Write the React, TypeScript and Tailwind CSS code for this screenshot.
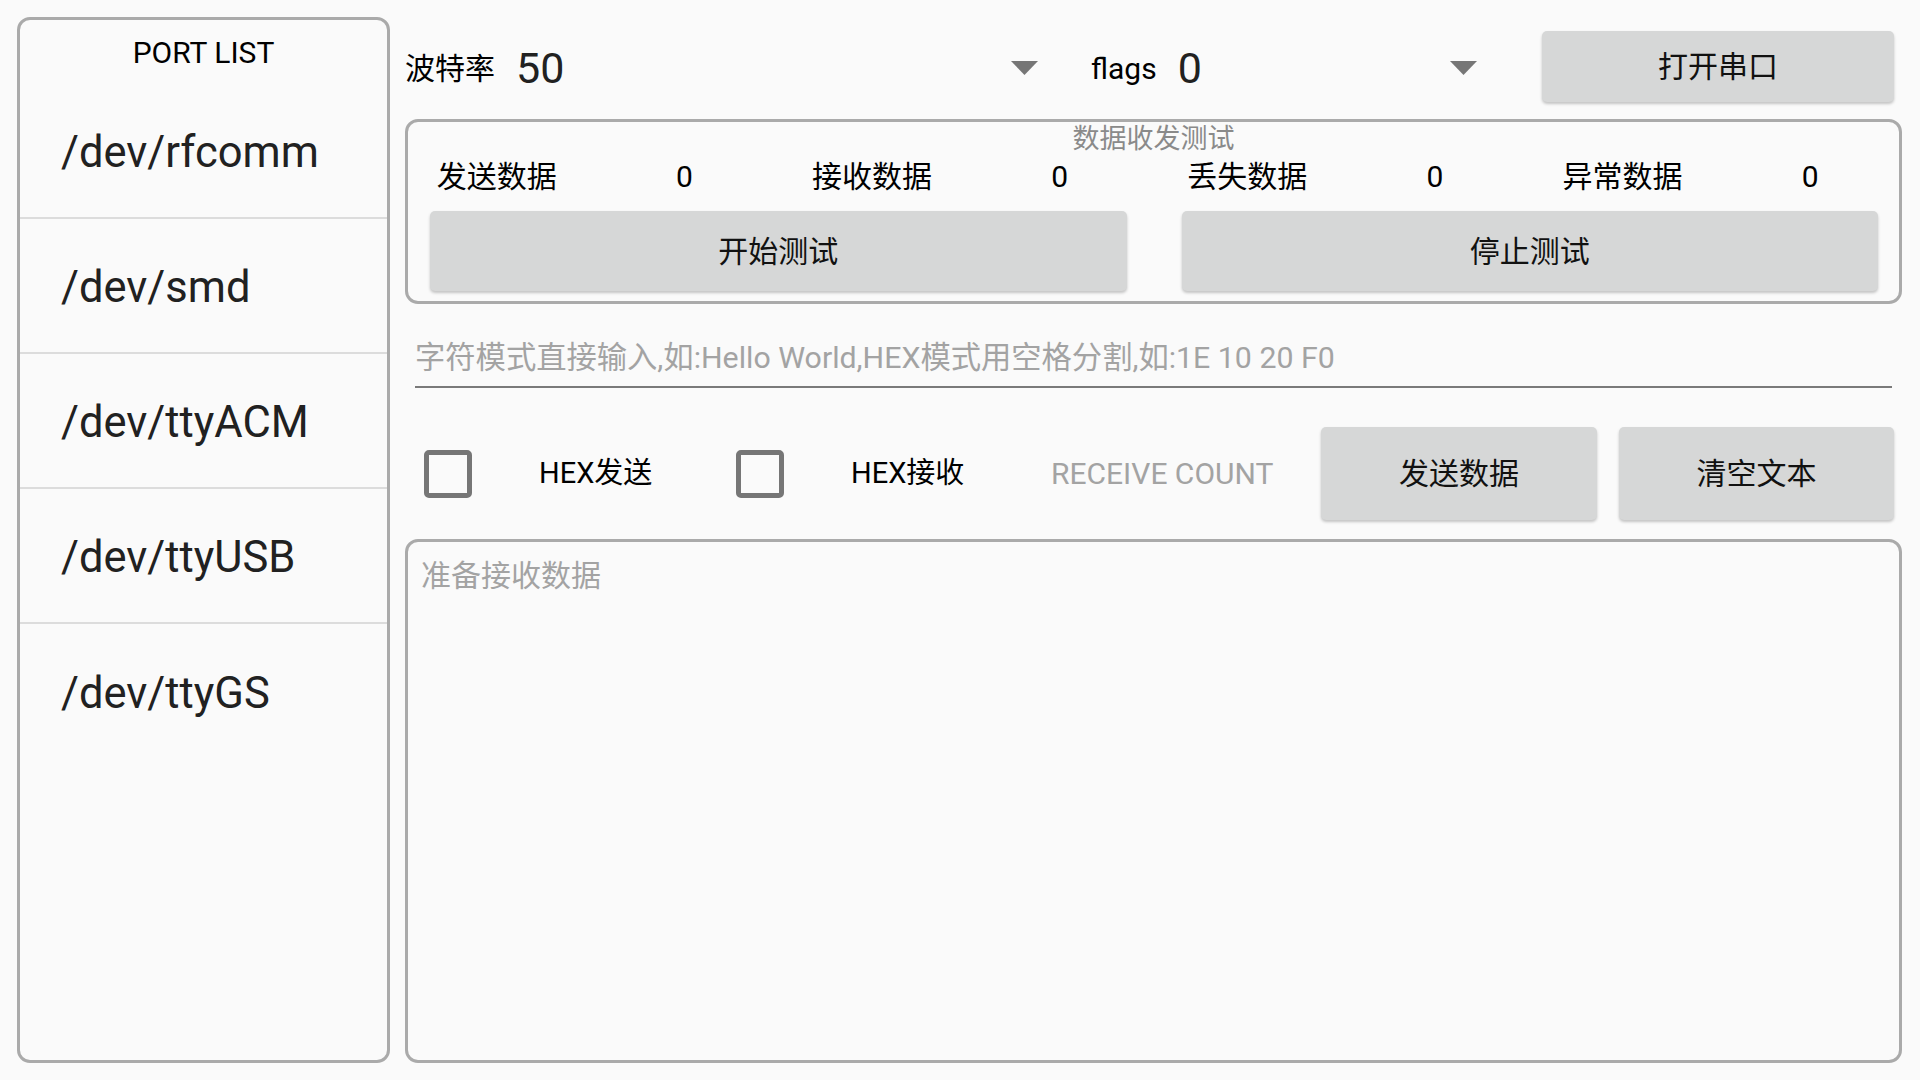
import React from 'react';

const ports = ['/dev/rfcomm', '/dev/smd', '/dev/ttyACM', '/dev/ttyUSB', '/dev/ttyGS'];

const stats = [
  { label: '发送数据', value: 0 },
  { label: '接收数据', value: 0 },
  { label: '丢失数据', value: 0 },
  { label: '异常数据', value: 0 },
];

function Arrow() {
  return (
    <svg width="27" height="14" viewBox="0 0 27 14" className="shrink-0">
      <path d="M0 0 L27 0 L13.5 14 Z" fill="#767676" />
    </svg>
  );
}

function GrayButton({ label, className = '' }: { label: string; className?: string }) {
  return (
    <button
      className={`bg-[#d6d7d7] rounded-[5px] shadow-[0_2px_3px_rgba(0,0,0,0.22)] text-[30px] text-[#111] flex items-center justify-center ${className}`}
    >
      {label}
    </button>
  );
}

function CheckBox() {
  return <div className="w-[48px] h-[48px] shrink-0 border-[5px] border-[#767676] rounded-[5px]" />;
}

export default function App() {
  return (
    <div className="w-full h-screen bg-[#fafafa] p-[17px] flex font-['Roboto','Noto_Sans_CJK_SC',sans-serif] text-[#212121] overflow-hidden">
      {/* port list */}
      <div className="w-[373px] h-full border-[3px] border-[#aaaaaa] rounded-[13px] flex flex-col">
        <div className="h-[64px] flex items-center justify-center text-[30px] text-black">PORT LIST</div>
        {ports.map((p, i) => (
          <div
            key={p}
            className={`h-[135px] flex items-center pl-[41px] pt-[4px] text-[43.5px] ${
              i < ports.length - 1 ? 'border-b-2 border-[#dcdcdc]' : ''
            }`}
          >
            {p}
          </div>
        ))}
      </div>

      <div className="flex-1 ml-[15px] mr-[1px] flex flex-col">
        {/* top row */}
        <div className="h-[102px] flex items-center">
          <div className="w-[645px] flex items-center">
            <span className="text-[30px] text-black">波特率</span>
            <span className="ml-[21px] text-[43px] leading-none">50</span>
            <div className="ml-auto mr-[12px]">
              <Arrow />
            </div>
          </div>
          <div className="ml-[41px] w-[398px] flex items-center">
            <span className="text-[30px] text-black">flags</span>
            <span className="ml-[21px] text-[43px] leading-none">0</span>
            <div className="ml-auto mr-[12px]">
              <Arrow />
            </div>
          </div>
          <GrayButton label="打开串口" className="ml-[53px] w-[352px] h-[71px] -mt-[3px]" />
        </div>

        {/* test box */}
        <div className="h-[185px] border-[3px] border-[#aaaaaa] rounded-[13px] flex flex-col">
          <div className="h-[30px] pt-[4px] flex items-center justify-center text-[27px] text-[#8a8a8a]">数据收发测试</div>
          <div className="h-[48px] -mx-[5px] grid grid-cols-8 items-center text-[30px] text-black">
            {stats.map((s) => (
              <React.Fragment key={s.label}>
                <div className="text-center">{s.label}</div>
                <div className="text-center">{s.value}</div>
              </React.Fragment>
            ))}
          </div>
          <div className="mt-[11px] grid grid-cols-2 gap-[55px] pl-[22px] pr-[21px]">
            <GrayButton label="开始测试" className="h-[80px]" />
            <GrayButton label="停止测试" className="h-[80px]" />
          </div>
        </div>

        {/* input */}
        <div className="mt-[36px] mx-[10px] h-[48px] border-b-2 border-[#7a7a7a] text-[30.3px] leading-[36px] text-[#a3a3a3] whitespace-nowrap">
          字符模式直接输入,如:Hello World,HEX模式用空格分割,如:1E 10 20 F0
        </div>

        {/* options row */}
        <div className="mt-[39px] h-[93px] flex items-center whitespace-nowrap">
          <div className="ml-[19px]">
            <CheckBox />
          </div>
          <span className="ml-[67px] w-[116px] text-[29px] text-black">HEX发送</span>
          <div className="ml-[81px]">
            <CheckBox />
          </div>
          <span className="ml-[67px] w-[115px] text-[29px] text-black">HEX接收</span>
          <span className="ml-[85px] text-[30px] text-[#a3a3a3]">RECEIVE COUNT</span>
          <GrayButton label="发送数据" className="ml-auto w-[276px] h-[93px]" />
          <GrayButton label="清空文本" className="ml-[22px] w-[275px] h-[93px] mr-[8px]" />
        </div>

        {/* receive area */}
        <div className="mt-[19px] flex-1 border-[3px] border-[#aaaaaa] rounded-[13px] pt-[16px] pl-[13px] text-[30px] leading-[36px] text-[#a3a3a3]">
          准备接收数据
        </div>
      </div>
    </div>
  );
}
